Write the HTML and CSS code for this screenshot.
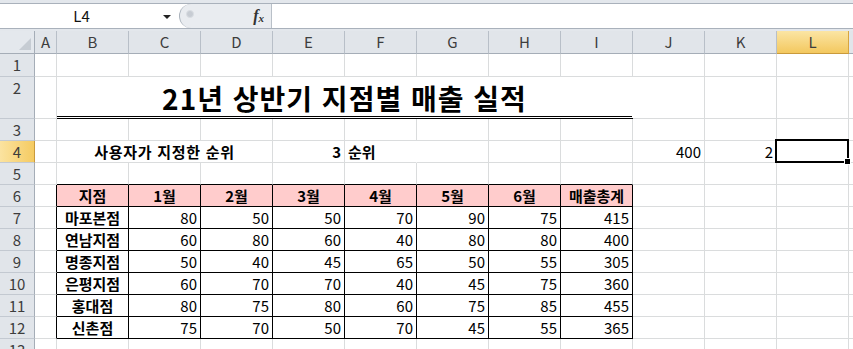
FILE: index.html
```html
<!DOCTYPE html>
<html lang="ko">
<head>
    <meta charset="UTF-8">
    <title>21년 상반기 지점별 매출 실적</title>
    <link rel="stylesheet" href="styles.css">
</head>
<body>
    <div class="fbar">
        <div class="fbar-in">
            <div class="namebox"><span class="ref">L4</span><span class="dd"></span></div>
            <div class="fxzone"><span class="knob"></span><span class="fx">f<i>x</i></span></div>
            <div class="formula"></div>
        </div>
    </div>

    <div class="sheet">
        <!-- 열 머리글 -->
        <div class="corner"><span class="tri"></span></div>
        <div class="hd">A</div><div class="hd">B</div><div class="hd">C</div><div class="hd">D</div>
        <div class="hd">E</div><div class="hd">F</div><div class="hd">G</div><div class="hd">H</div>
        <div class="hd">I</div><div class="hd">J</div><div class="hd">K</div><div class="hd sel">L</div><div class="hd"></div>

        <!-- 1 -->
        <div class="rh">1</div>
        <div class="c"></div><div class="c"></div><div class="c"></div><div class="c"></div><div class="c"></div><div class="c"></div>
        <div class="c"></div><div class="c"></div><div class="c"></div><div class="c"></div><div class="c"></div><div class="c"></div><div class="c"></div>

        <!-- 2 제목 -->
        <div class="rh">2</div>
        <div class="c"></div>
        <div class="c title">21년 상반기 지점별 매출 실적</div>
        <div class="c"></div><div class="c"></div><div class="c"></div><div class="c"></div>

        <!-- 3 -->
        <div class="rh">3</div>
        <div class="c"></div><div class="c"></div><div class="c"></div><div class="c"></div><div class="c"></div><div class="c"></div>
        <div class="c"></div><div class="c"></div><div class="c"></div><div class="c"></div><div class="c"></div><div class="c"></div><div class="c"></div>

        <!-- 4 -->
        <div class="rh sel">4</div>
        <div class="c"></div>
        <div class="c ctr span3 ask">사용자가 지정한 순위</div>
        <div class="c num b">3</div>
        <div class="c b nogrid">순위</div>
        <div class="c"></div><div class="c"></div><div class="c"></div>
        <div class="c num">400</div>
        <div class="c num">2</div>
        <div class="c cur"><span class="cursor"><span class="handle"></span></span></div>
        <div class="c"></div>

        <!-- 5 -->
        <div class="rh">5</div>
        <div class="c"></div>
        <div class="c top"></div><div class="c top"></div><div class="c top"></div><div class="c top"></div>
        <div class="c top"></div><div class="c top"></div><div class="c top"></div><div class="c top"></div>
        <div class="c"></div><div class="c"></div><div class="c"></div><div class="c"></div>

        <!-- 6 머리글 -->
        <div class="rh">6</div>
        <div class="c left"></div>
        <div class="c th">지점</div><div class="c th">1월</div><div class="c th">2월</div><div class="c th">3월</div>
        <div class="c th">4월</div><div class="c th">5월</div><div class="c th">6월</div><div class="c th">매출총계</div>
        <div class="c"></div><div class="c"></div><div class="c"></div><div class="c"></div>

        <!-- 7 -->
        <div class="rh">7</div>
        <div class="c left"></div>
        <div class="c tb name">마포본점</div><div class="c tb num">80</div><div class="c tb num">50</div><div class="c tb num">50</div>
        <div class="c tb num">70</div><div class="c tb num">90</div><div class="c tb num">75</div><div class="c tb num">415</div>
        <div class="c"></div><div class="c"></div><div class="c"></div><div class="c"></div>

        <!-- 8 -->
        <div class="rh">8</div>
        <div class="c left"></div>
        <div class="c tb name">연남지점</div><div class="c tb num">60</div><div class="c tb num">80</div><div class="c tb num">60</div>
        <div class="c tb num">40</div><div class="c tb num">80</div><div class="c tb num">80</div><div class="c tb num">400</div>
        <div class="c"></div><div class="c"></div><div class="c"></div><div class="c"></div>

        <!-- 9 -->
        <div class="rh">9</div>
        <div class="c left"></div>
        <div class="c tb name">명종지점</div><div class="c tb num">50</div><div class="c tb num">40</div><div class="c tb num">45</div>
        <div class="c tb num">65</div><div class="c tb num">50</div><div class="c tb num">55</div><div class="c tb num">305</div>
        <div class="c"></div><div class="c"></div><div class="c"></div><div class="c"></div>

        <!-- 10 -->
        <div class="rh">10</div>
        <div class="c left"></div>
        <div class="c tb name">은평지점</div><div class="c tb num">60</div><div class="c tb num">70</div><div class="c tb num">70</div>
        <div class="c tb num">40</div><div class="c tb num">45</div><div class="c tb num">75</div><div class="c tb num">360</div>
        <div class="c"></div><div class="c"></div><div class="c"></div><div class="c"></div>

        <!-- 11 -->
        <div class="rh">11</div>
        <div class="c left"></div>
        <div class="c tb name">홍대점</div><div class="c tb num">80</div><div class="c tb num">75</div><div class="c tb num">80</div>
        <div class="c tb num">60</div><div class="c tb num">75</div><div class="c tb num">85</div><div class="c tb num">455</div>
        <div class="c"></div><div class="c"></div><div class="c"></div><div class="c"></div>

        <!-- 12 -->
        <div class="rh">12</div>
        <div class="c left"></div>
        <div class="c tb name">신촌점</div><div class="c tb num">75</div><div class="c tb num">70</div><div class="c tb num">50</div>
        <div class="c tb num">70</div><div class="c tb num">45</div><div class="c tb num">55</div><div class="c tb num">365</div>
        <div class="c"></div><div class="c"></div><div class="c"></div><div class="c"></div>

        <!-- 13 -->
        <div class="rh">13</div>
        <div class="c"></div><div class="c"></div><div class="c"></div><div class="c"></div><div class="c"></div><div class="c"></div>
        <div class="c"></div><div class="c"></div><div class="c"></div><div class="c"></div><div class="c"></div><div class="c"></div><div class="c"></div>
    </div>
</body>
</html>
```

FILE: styles.css
```css
body {
    margin: 0;
    background-color: #fff;
    font-family: "Noto Sans CJK KR", "Noto Sans", sans-serif;
    color: #000;
    overflow: hidden;
}
/* 수식 입력줄 */
.fbar {
    height: 31px;
    box-sizing: border-box;
    padding: 3px 0 2px;
    background-color: #e3e7ec;
}
.fbar-in {
    display: flex;
    height: 26px;
    box-sizing: border-box;
    border-top: 1px solid #a9b1bb;
    border-bottom: 1px solid #a9b1bb;
    background-color: #fff;
}
.namebox {
    width: 179px;
    display: flex;
    align-items: center;
    position: relative;
}
.ref {
    width: 163px;
    text-align: center;
    font-size: 15px;
    line-height: 24px;
    color: #111;
}
.dd {
    width: 0;
    height: 0;
    border-left: 4px solid transparent;
    border-right: 4px solid transparent;
    border-top: 4px solid #222;
    margin-top: 1px;
}
.fxzone {
    width: 93px;
    display: flex;
    align-items: center;
    justify-content: space-between;
    padding: 0 7px 0 6px;
    box-sizing: border-box;
    background-color: #e9ecf0;
    border-left: 1px solid #a9b1bb;
    border-right: 1px solid #b9c0c8;
    border-radius: 12px 0 0 12px;
}
.knob {
    width: 6px;
    height: 6px;
    margin-top: -4px;
    border-radius: 50%;
    background-color: #c7ccd3;
    border: 1px solid #d9dde2;
}
.fx {
    font-family: "Liberation Serif", serif;
    font-style: italic;
    font-weight: bold;
    font-size: 16px;
    color: #333;
}
.fx i {
    font-size: 11px;
    vertical-align: -1px;
}
.formula {
    flex: 1;
}
/* 시트 */
.sheet {
    display: grid;
    grid-template-columns: 35px 22px repeat(11, 72px) 1fr;
    grid-template-rows: 23px 23px 42px repeat(11, 22px);
}
.sheet > div {
    box-sizing: border-box;
}
.corner {
    background-color: #e4e8ed;
    border-right: 1px solid #a5adb7;
    border-bottom: 1px solid #a5adb7;
    position: relative;
}
.tri {
    position: absolute;
    right: 3px;
    bottom: 3px;
    width: 0;
    height: 0;
    border-left: 12px solid transparent;
    border-bottom: 12px solid #c6ccd3;
}
.hd {
    background-color: #e1e5ea;
    border-right: 1px solid #b8bfc8;
    border-bottom: 1px solid #a5adb7;
    text-align: center;
    font-size: 15px;
    line-height: 22px;
    color: #3d3d3d;
}
.hd.sel {
    background: linear-gradient(#fbe5a4, #f3c85f);
    border-right-color: #d7a540;
    border-bottom-color: #c99a3c;
}
.rh {
    background-color: #e1e5ea;
    border-right: 1px solid #a5adb7;
    border-bottom: 1px solid #c3c9d1;
    text-align: center;
    font-size: 15px;
    line-height: 21px;
    color: #3d3d3d;
}
.rh.sel {
    background: linear-gradient(90deg, #fbe3a0, #f5cb62);
    border-right-color: #c99a3c;
}
.c {
    border-right: 1px solid #dadcdd;
    border-bottom: 1px solid #dadcdd;
    font-size: 15px;
    line-height: 21px;
    padding: 0 3px;
    white-space: nowrap;
}
.num {
    text-align: right;
}
.ctr {
    text-align: center;
}
.b {
    font-weight: bold;
}
.span3 {
    grid-column: span 3;
}
.ask {
    font-size: 15px;
    font-weight: bold;
    letter-spacing: 0.7px;
}
.nogrid {
    border-right-color: transparent;
}
.title {
    grid-column: span 8;
    display: flex;
    align-items: flex-end;
    justify-content: center;
    padding-bottom: 2px;
    font-size: 28px;
    font-weight: bold;
    letter-spacing: 1px;
    line-height: 32px;
    border-right-color: transparent;
    border-bottom: 3px double #000;
}
/* 표 */
.top {
    border-bottom-color: #000;
}
.left {
    border-right-color: #000;
}
.th {
    background-color: #ffcccc;
    border-right-color: #000;
    border-bottom-color: #000;
    font-weight: bold;
    text-align: center;
}
.tb {
    border-right-color: #000;
    border-bottom-color: #000;
}
.name {
    font-weight: bold;
    text-align: center;
}
/* 선택된 셀 */
.cur {
    position: relative;
}
.cursor {
    position: absolute;
    left: -2px;
    top: -2px;
    right: -1px;
    bottom: -1px;
    border: 2px solid #000;
}
.handle {
    position: absolute;
    right: -4px;
    bottom: -4px;
    width: 5px;
    height: 5px;
    background-color: #000;
    border: 1px solid #fff;
}
```
